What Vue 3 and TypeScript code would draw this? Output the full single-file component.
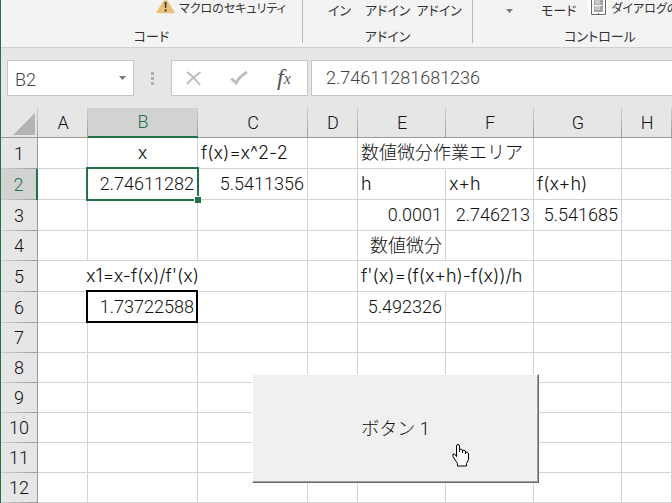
<script setup lang="ts">
import { ref } from 'vue'

interface Cell {
  text: string
  align?: 'left' | 'center' | 'right'
  open?: boolean
  state?: 'selected' | 'boxed'
}

const columns = ['A', 'B', 'C', 'D', 'E', 'F', 'G', 'H']
const rowNumbers = Array.from({ length: 12 }, (_, i) => i + 1)
const tallRows = [1, 2, 3, 5, 6]

const cells: Record<string, Cell> = {
  B1: { text: 'x', align: 'center' },
  C1: { text: 'f(x)=x^2-2' },
  E1: { text: '数値微分作業エリア', open: true },
  B2: { text: '2.74611282', align: 'right', state: 'selected' },
  C2: { text: '5.5411356', align: 'right' },
  E2: { text: 'h' },
  F2: { text: 'x+h' },
  G2: { text: 'f(x+h)' },
  E3: { text: '0.0001', align: 'right' },
  F3: { text: '2.746213', align: 'right' },
  G3: { text: '5.541685', align: 'right' },
  E4: { text: '数値微分', align: 'right' },
  A5: { text: '', open: true },
  B5: { text: "x1=x-f(x)/f'(x)", align: 'center', open: true },
  E5: { text: "f'(x)=(f(x+h)-f(x))/h", open: true },
  B6: { text: '1.73722588', align: 'right', state: 'boxed' },
  E6: { text: '5.492326', align: 'right' },
}

const cellName = ref('B2')
const formula = ref('2.74611281681236')

function cellClass(key: string) {
  const c = cells[key]
  return [c?.align ?? 'left', c?.state, { open: c?.open }]
}
</script>

<template>
  <div class="excel">
    <header class="ribbon">
      <section class="group code">
        <div class="tools">
          <a href="#" class="tool">
            <svg class="warn" viewBox="0 0 20 16" aria-hidden="true">
              <path d="M8.6 0h2.8L19.6 12.6Q20 14 18.5 14H1.5Q0 14 .4 12.6z" fill="#ebc078" />
              <path d="M8.9 2h2.4l-.5 6.6H9.4z" fill="#444" />
              <rect x="9" y="10" width="2.2" height="2.2" fill="#444" />
            </svg>
            <span>マクロのセキュリティ</span>
          </a>
        </div>
        <div class="caption">コード</div>
      </section>
      <section class="group addins">
        <div class="tools low">
          <a href="#" class="tool">イン</a>
          <a href="#" class="tool">アドイン</a>
          <a href="#" class="tool">アドイン</a>
        </div>
        <div class="caption">アドイン</div>
      </section>
      <section class="group controls">
        <div class="tools low">
          <button class="drop" aria-label="挿入">
            <svg viewBox="0 0 7 4" aria-hidden="true"><path d="M0 0h7L3.5 4z" fill="#777" /></svg>
          </button>
          <a href="#" class="tool mode">モード</a>
          <a href="#" class="tool dialog">
            <svg viewBox="0 0 20 16" aria-hidden="true">
              <rect width="20" height="16" fill="#fff" />
              <path d="M3.5 0v14.5h14V0" fill="#fff" stroke="#666" />
              <rect x="6" y="0" width="9" height="12" fill="#a5a5a5" />
              <path d="M7 0h5v4H7zM7 6h5v4H7z" fill="#c9c9c9" />
              <path d="M6 5.5h8M9 13.5h3" stroke="#fff" />
              <path d="M10 13.5h1" stroke="#555" />
            </svg>
            <span>ダイアログの</span>
          </a>
        </div>
        <div class="caption">コントロール</div>
      </section>
    </header>

    <div class="formula-bar">
      <div class="name-box">
        <input v-model="cellName" aria-label="名前ボックス" />
        <button class="drop" aria-label="名前の一覧">
          <svg viewBox="0 0 7 4" aria-hidden="true"><path d="M0 0h7L3.5 4z" fill="#777" /></svg>
        </button>
      </div>
      <div class="grip"><i></i><i></i><i></i></div>
      <div class="actions">
        <button aria-label="キャンセル">
          <svg viewBox="0 0 18 18" aria-hidden="true">
            <path d="M2 3Q8 7 15 16M15.5 3Q8 8 2 15" fill="none" stroke="#bdbdbd" stroke-width="2" />
          </svg>
        </button>
        <button aria-label="入力">
          <svg viewBox="0 0 18 18" aria-hidden="true">
            <path d="M1.5 9.5 6 14Q9 8 17 3" fill="none" stroke="#bdbdbd" stroke-width="3" />
          </svg>
        </button>
        <button aria-label="関数の挿入" class="fx">f<sub>x</sub></button>
      </div>
      <input v-model="formula" class="formula" aria-label="数式バー" />
    </div>

    <main class="sheet">
      <table>
        <colgroup>
          <col class="c-head" />
          <col v-for="c in columns" :key="c" :class="'c-' + c" />
        </colgroup>
        <thead>
          <tr>
            <th class="corner">
              <svg viewBox="0 0 22 22" aria-hidden="true"><path d="M22 0v22H0z" fill="#b4b4b4" /></svg>
            </th>
            <th v-for="c in columns" :key="c" scope="col" :class="{ active: c === 'B' }">{{ c }}</th>
          </tr>
        </thead>
        <tbody>
          <tr v-for="r in rowNumbers" :key="r" :class="{ tall: tallRows.includes(r) }">
            <th scope="row" :class="{ active: r === 2 }">{{ r }}</th>
            <td v-for="c in columns" :key="c" :class="cellClass(c + r)">
              <div v-if="cells[c + r]">{{ cells[c + r].text }}</div>
            </td>
          </tr>
        </tbody>
      </table>

      <button class="macro">ボタン 1</button>
      <svg class="pointer" viewBox="0 0 18 23" aria-hidden="true">
        <path
          d="M4.5 12.5V2Q4.5.5 6 .5T7.5 2v6V5.5Q9 4.5 10.5 6v3-2.500Q12 5.500 13.500 7v3-2Q16 7.500 16.500 10v5.500l-2 4v2.500H5.500v-2.500L1 12.500V10Q2.500 9 4.500 12.500z"
          fill="#fff" stroke="#000" stroke-linejoin="round"
        />
      </svg>
    </main>
  </div>
</template>

<style>
body {
  margin: 0;
  background: #fff;
}
</style>

<style scoped>
.excel {
  border-left: 1px solid #217346;
  overflow: hidden;
  background: #e6e6e6;
  color: #111;
  font-family: Roboto, "Noto Sans CJK JP", sans-serif;
  font-weight: 300;
  font-size: 18px;
}
.excel * {
  box-sizing: border-box;
}
button,
input {
  margin: 0;
  padding: 0;
  border: 0;
  background: none;
  font: inherit;
  color: inherit;
}
svg {
  display: block;
}

.ribbon {
  display: grid;
  grid-template-columns: 302px 170px 1fr;
  height: 48px;
  padding-bottom: 4px;
  background: #f3f3f3;
  border-bottom: 1px solid #d0d0d0;
  font-family: "Noto Sans CJK JP", sans-serif;
  font-size: 13px;
  line-height: 16px;
  font-weight: 400;
  font-feature-settings: "palt";
  color: #333;
}
.group {
  display: flex;
  flex-direction: column;
  justify-content: space-between;
  height: 43px;
  border-right: 1px solid #b8b8b8;
  white-space: nowrap;
  min-width: 0;
}
.controls {
  border-right: 0;
}
.tools {
  display: flex;
  height: 20px;
}
.low {
  padding-top: 2px;
}
.tool {
  color: inherit;
  text-decoration: none;
}
.code .tool,
.dialog {
  display: flex;
  font-size: 12px;
}
.code .tool {
  gap: 4px;
  margin-left: 155px;
}
.warn {
  width: 19px;
  height: 15px;
}
.addins .tools {
  gap: 6px;
  padding-left: 25px;
}
.addins .tool:first-child {
  margin-right: 8px;
}
.controls .tools {
  padding-left: 33px;
}
.drop svg {
  width: 7px;
  height: 4px;
}
.mode {
  margin: 0 12px 0 28px;
}
.dialog {
  gap: 3px;
  margin-top: -2px;
}
.dialog svg {
  flex: none;
  width: 20px;
  height: 16px;
}
.caption {
  height: 15px;
  text-align: center;
}
.controls .caption {
  width: 254px;
}

.formula-bar {
  display: flex;
  height: 60px;
  padding: 12px 0 12px 6px;
}
.name-box,
.actions,
.formula {
  height: 36px;
  border: 1px solid #c6c6c6;
  background: #fff;
}
.name-box {
  display: flex;
  align-items: center;
  width: 127px;
  padding: 3px 7px 0;
  color: #444;
}
.name-box input {
  flex: 1;
  min-width: 0;
}
.name-box .drop svg {
  margin-top: -3px;
}
.grip {
  display: flex;
  flex-direction: column;
  justify-content: center;
  align-items: center;
  gap: 2px;
  width: 37px;
}
.grip i {
  width: 3px;
  height: 3px;
  background: #b0b0b0;
}
.actions {
  display: flex;
  align-items: center;
  justify-content: space-between;
  width: 137px;
  padding: 0 13px;
}
.actions svg {
  width: 18px;
  height: 18px;
}
.fx {
  width: 20px;
  padding-bottom: 2px;
  font: italic 24px/24px "Liberation Serif", serif;
  color: #555;
}
.fx sub {
  font-size: 16px;
  line-height: 0;
  vertical-align: 1px;
}
.formula {
  flex: 1;
  min-width: 0;
  margin-left: 3px;
  padding: 0 14px 2px;
  border-right: 0;
  color: #444;
}

.sheet {
  position: relative;
}
table {
  width: 100%;
  table-layout: fixed;
  border-collapse: separate;
  border-spacing: 0;
  background: #fff;
}
.c-head {
  width: 37px;
}
.c-A,
.c-D {
  width: 50px;
}
.c-B,
.c-C {
  width: 110px;
}
.c-E,
.c-F,
.c-G {
  width: 88px;
}
tr {
  height: 30px;
}
.tall {
  height: 31px;
}
th,
td {
  padding: 0;
  line-height: 26px;
}
th {
  font-weight: 300;
  text-align: center;
  background: #e6e6e6;
}
thead th {
  border-bottom: 1px solid #999;
  background: linear-gradient(#d0d0d0, #999) right / 1px 100% no-repeat #e6e6e6;
}
tbody th {
  border-right: 1px solid #999;
  background: linear-gradient(90deg, #d0d0d0, #999) bottom / 100% 1px no-repeat #e6e6e6;
}
th.active {
  background-color: #d2d2d2;
  color: #217346;
}
thead .active {
  border-bottom: 2px solid #217346;
}
tbody .active {
  border-right: 2px solid #217346;
}
.corner svg {
  width: 22px;
  height: 22px;
  margin: 3px 3px 0 auto;
}
td {
  border-right: 1px solid #d4d4d4;
  border-bottom: 1px solid #d4d4d4;
  white-space: nowrap;
}
td.open {
  border-right-color: transparent;
}
td div {
  display: flex;
  padding: 0 3px;
}
.left,
.center {
  font-family: Inter, "Noto Sans CJK JP", sans-serif;
  font-feature-settings: "calt" 0;
}
.center div {
  justify-content: center;
}
.right div {
  justify-content: flex-end;
}
.selected,
.boxed {
  position: relative;
}
.selected::before,
.boxed::before {
  content: "";
  position: absolute;
  inset: -2px;
  border: 2px solid #217346;
}
.boxed::before {
  border-color: #000;
  inset: -2px -1px -1px -2px;
}
.selected::after {
  content: "";
  position: absolute;
  right: -4px;
  bottom: -4px;
  width: 6px;
  height: 6px;
  border: 1px solid #fff;
  border-width: 1px 0 0 1px;
  background: #217346;
}

.macro {
  position: absolute;
  left: 251px;
  top: 266px;
  width: 287px;
  height: 109px;
  padding-bottom: 4px;
  background: #f0f0f0;
  border: 1px solid #fff;
  border-right-color: #696969;
  border-bottom-color: #696969;
  box-shadow: inset -1px -1px #a0a0a0;
}
.pointer {
  position: absolute;
  left: 451px;
  top: 336px;
  width: 18px;
  height: 23px;
}
</style>
